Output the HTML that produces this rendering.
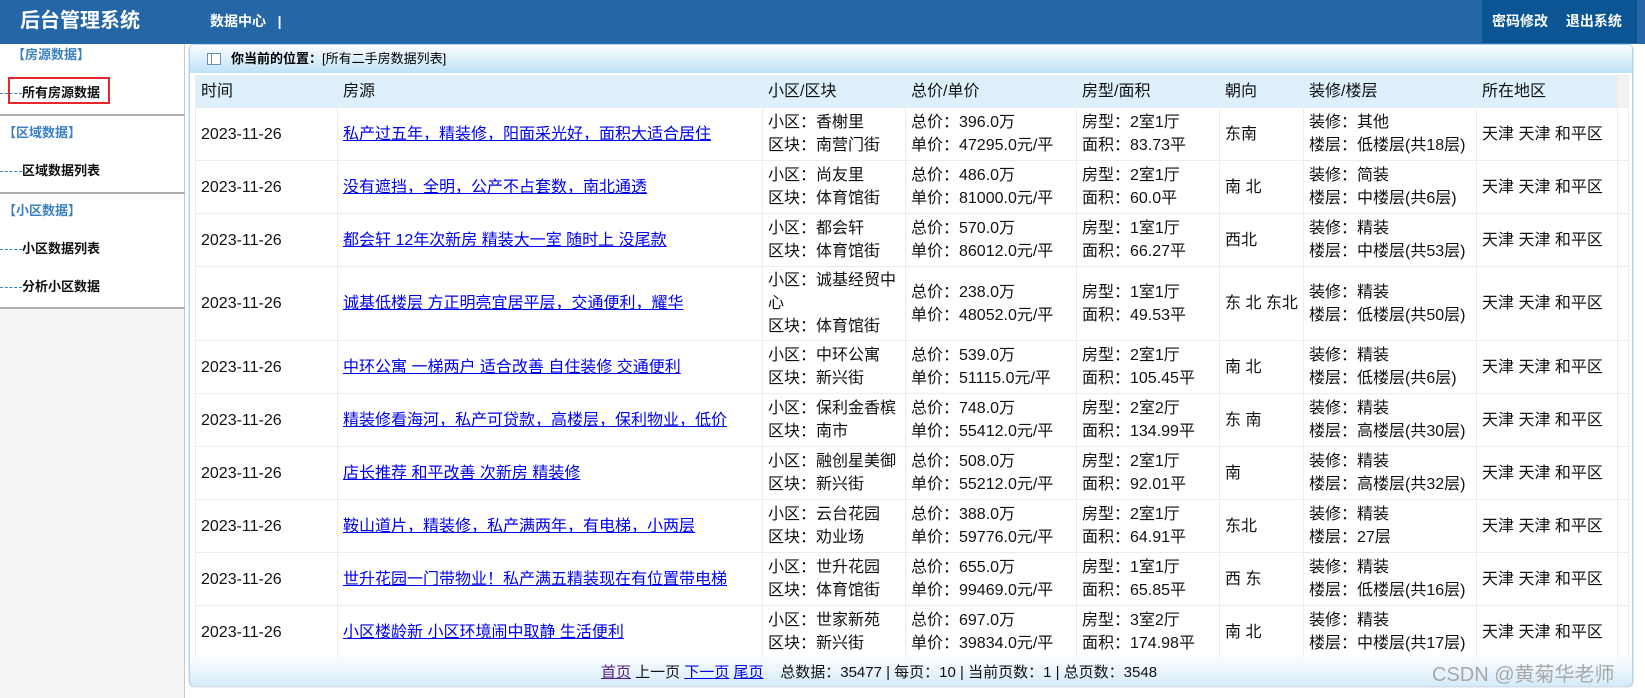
<!DOCTYPE html>
<html><head><meta charset="utf-8"><style>
*{margin:0;padding:0;box-sizing:border-box}
body{width:1645px;height:698px;overflow:hidden;background:#fff;font-family:"Liberation Sans","Noto Sans CJK SC",sans-serif;position:relative}
#hd{position:absolute;left:0;top:0;width:1645px;height:44px;background:#2566a7}
#hd .t{position:absolute;left:20px;top:8px;color:#fff;font-size:20px;font-weight:bold;line-height:26px}
#hd .m{position:absolute;left:210px;top:11px;color:#fff;font-size:14px;font-weight:bold;line-height:20px}
#hd .r{position:absolute;left:1482px;top:0;width:155px;height:43px;background:#0b5594;color:#fff;font-size:14px;font-weight:bold;line-height:43px;padding-left:10px;word-spacing:14px}
#sb{position:absolute;left:0;top:44px;width:185px;height:654px;background:#f5f5f5;border-right:1px solid #c8c8c8}
#sb .w{background:#fff;height:264px}
.g{color:#3a80c2;font-weight:bold;font-size:13px;position:absolute;line-height:18px}
.i{position:absolute;left:0;font-size:13px;font-weight:bold;color:#111;line-height:18px}
.i span{display:inline-block;width:22px;height:9px;border-top:1px dashed #3a80c2;vertical-align:middle;margin-top:0;position:relative;top:4px}
.ln{position:absolute;left:0;width:185px;height:2px;background:#b0b0b0}
#pn{position:absolute;left:189px;top:44px;width:1444px;height:642px;border:1px solid #a9d3ef;border-radius:5px;background:#fff;box-shadow:0 1px 2px #bcd}
#ph{height:28px;background:linear-gradient(#fbfdff,#bde2f8);border-radius:5px 5px 0 0;font-size:13px;line-height:28px;padding-left:41px;position:relative}
#ph b{font-weight:bold}
#ic{position:absolute;left:17px;top:8px;width:14px;height:12px;border:1px solid #6b8fb5;background:#fff}
#ic:before{content:"";position:absolute;left:3px;top:0;width:1px;height:10px;background:#6b8fb5}
table{position:absolute;left:5px;top:30px;border-collapse:collapse;table-layout:fixed;width:1433px;font-size:16px;color:#111}
td,th{border:1px solid #ececec;padding:0 5px;line-height:23px;text-align:left;font-weight:normal;vertical-align:middle;overflow:hidden}
th{background:#ddf0fc;height:32px}
th.e{background:#f2f2f2}
tr.r td{height:53px}
tr.t td{height:74px}
a{color:#0000ee}
#ft{position:absolute;left:0;top:612px;width:1442px;height:29px;background:linear-gradient(#fbfdff,#d5ebfa);font-size:15px;line-height:31px;color:#111;padding-left:411px;border-radius:0 0 5px 5px}
#wm{position:absolute;left:1432px;top:662px;font-size:20px;color:#a8a8a8;line-height:26px}
</style></head><body>
<div id="hd"><div class="t">后台管理系统</div><div class="m">数据中心 &nbsp;&nbsp;|</div><div class="r">密码修改 退出系统</div></div>
<div id="sb"><div class="w"></div>
<div class="g" style="left:12px;top:2px">【房源数据】</div>
<div class="i" style="top:40px"><span></span>所有房源数据</div>
<div style="position:absolute;left:8px;top:33px;width:102px;height:27px;border:2px solid #e5262b"></div>
<div class="ln" style="top:70px"></div>
<div class="g" style="left:3px;top:80px">【区域数据】</div>
<div class="i" style="top:118px"><span></span>区域数据列表</div>
<div class="ln" style="top:148px"></div>
<div class="g" style="left:3px;top:158px">【小区数据】</div>
<div class="i" style="top:196px"><span></span>小区数据列表</div>
<div class="i" style="top:234px"><span></span>分析小区数据</div>
<div class="ln" style="top:263px"></div>
</div>
<div id="pn">
<div id="ph"><div id="ic"></div><b>你当前的位置：</b>[所有二手房数据列表]</div>
<table>
<colgroup><col style="width:142px"><col style="width:425px"><col style="width:143px"><col style="width:171px"><col style="width:143px"><col style="width:84px"><col style="width:173px"><col style="width:141px"><col style="width:11px"></colgroup>
<tr><th>时间</th><th>房源</th><th>小区/区块</th><th>总价/单价</th><th>房型/面积</th><th>朝向</th><th>装修/楼层</th><th>所在地区</th><th class="e"></th></tr>
<tr class="r"><td>2023-11-26</td><td><a href="#">私产过五年，精装修，阳面采光好，面积大适合居住</a></td><td>小区：香榭里<br>区块：南营门街</td><td>总价：396.0万<br>单价：47295.0元/平</td><td>房型：2室1厅<br>面积：83.73平</td><td>东南</td><td>装修：其他<br>楼层：低楼层(共18层)</td><td>天津 天津 和平区</td><td></td></tr>
<tr class="r"><td>2023-11-26</td><td><a href="#">没有遮挡，全明，公产不占套数，南北通透</a></td><td>小区：尚友里<br>区块：体育馆街</td><td>总价：486.0万<br>单价：81000.0元/平</td><td>房型：2室1厅<br>面积：60.0平</td><td>南 北</td><td>装修：简装<br>楼层：中楼层(共6层)</td><td>天津 天津 和平区</td><td></td></tr>
<tr class="r"><td>2023-11-26</td><td><a href="#">都会轩 12年次新房 精装大一室 随时上 没尾款</a></td><td>小区：都会轩<br>区块：体育馆街</td><td>总价：570.0万<br>单价：86012.0元/平</td><td>房型：1室1厅<br>面积：66.27平</td><td>西北</td><td>装修：精装<br>楼层：中楼层(共53层)</td><td>天津 天津 和平区</td><td></td></tr>
<tr class="t"><td>2023-11-26</td><td><a href="#">诚基低楼层 方正明亮宜居平层，交通便利，耀华</a></td><td>小区：诚基经贸中心<br>区块：体育馆街</td><td>总价：238.0万<br>单价：48052.0元/平</td><td>房型：1室1厅<br>面积：49.53平</td><td>东 北 东北</td><td>装修：精装<br>楼层：低楼层(共50层)</td><td>天津 天津 和平区</td><td></td></tr>
<tr class="r"><td>2023-11-26</td><td><a href="#">中环公寓 一梯两户 适合改善 自住装修 交通便利</a></td><td>小区：中环公寓<br>区块：新兴街</td><td>总价：539.0万<br>单价：51115.0元/平</td><td>房型：2室1厅<br>面积：105.45平</td><td>南 北</td><td>装修：精装<br>楼层：低楼层(共6层)</td><td>天津 天津 和平区</td><td></td></tr>
<tr class="r"><td>2023-11-26</td><td><a href="#">精装修看海河，私产可贷款，高楼层，保利物业，低价</a></td><td>小区：保利金香槟<br>区块：南市</td><td>总价：748.0万<br>单价：55412.0元/平</td><td>房型：2室2厅<br>面积：134.99平</td><td>东 南</td><td>装修：精装<br>楼层：高楼层(共30层)</td><td>天津 天津 和平区</td><td></td></tr>
<tr class="r"><td>2023-11-26</td><td><a href="#">店长推荐 和平改善 次新房 精装修</a></td><td>小区：融创星美御<br>区块：新兴街</td><td>总价：508.0万<br>单价：55212.0元/平</td><td>房型：2室1厅<br>面积：92.01平</td><td>南</td><td>装修：精装<br>楼层：高楼层(共32层)</td><td>天津 天津 和平区</td><td></td></tr>
<tr class="r"><td>2023-11-26</td><td><a href="#">鞍山道片，精装修，私产满两年，有电梯，小两层</a></td><td>小区：云台花园<br>区块：劝业场</td><td>总价：388.0万<br>单价：59776.0元/平</td><td>房型：2室1厅<br>面积：64.91平</td><td>东北</td><td>装修：精装<br>楼层：27层</td><td>天津 天津 和平区</td><td></td></tr>
<tr class="r"><td>2023-11-26</td><td><a href="#">世升花园一门带物业！私产满五精装现在有位置带电梯</a></td><td>小区：世升花园<br>区块：体育馆街</td><td>总价：655.0万<br>单价：99469.0元/平</td><td>房型：1室1厅<br>面积：65.85平</td><td>西 东</td><td>装修：精装<br>楼层：低楼层(共16层)</td><td>天津 天津 和平区</td><td></td></tr>
<tr class="r"><td>2023-11-26</td><td><a href="#">小区楼龄新 小区环境闹中取静 生活便利</a></td><td>小区：世家新苑<br>区块：新兴街</td><td>总价：697.0万<br>单价：39834.0元/平</td><td>房型：3室2厅<br>面积：174.98平</td><td>南 北</td><td>装修：精装<br>楼层：中楼层(共17层)</td><td>天津 天津 和平区</td><td></td></tr>
</table>
<div id="ft"><a href="#" style="color:#551a8b">首页</a> 上一页 <a href="#">下一页</a> <a href="#">尾页</a> &nbsp;&nbsp; 总数据：35477 | 每页：10 | 当前页数：1 | 总页数：3548</div>
</div>
<div id="wm">CSDN @黄菊华老师</div>
</body></html>
